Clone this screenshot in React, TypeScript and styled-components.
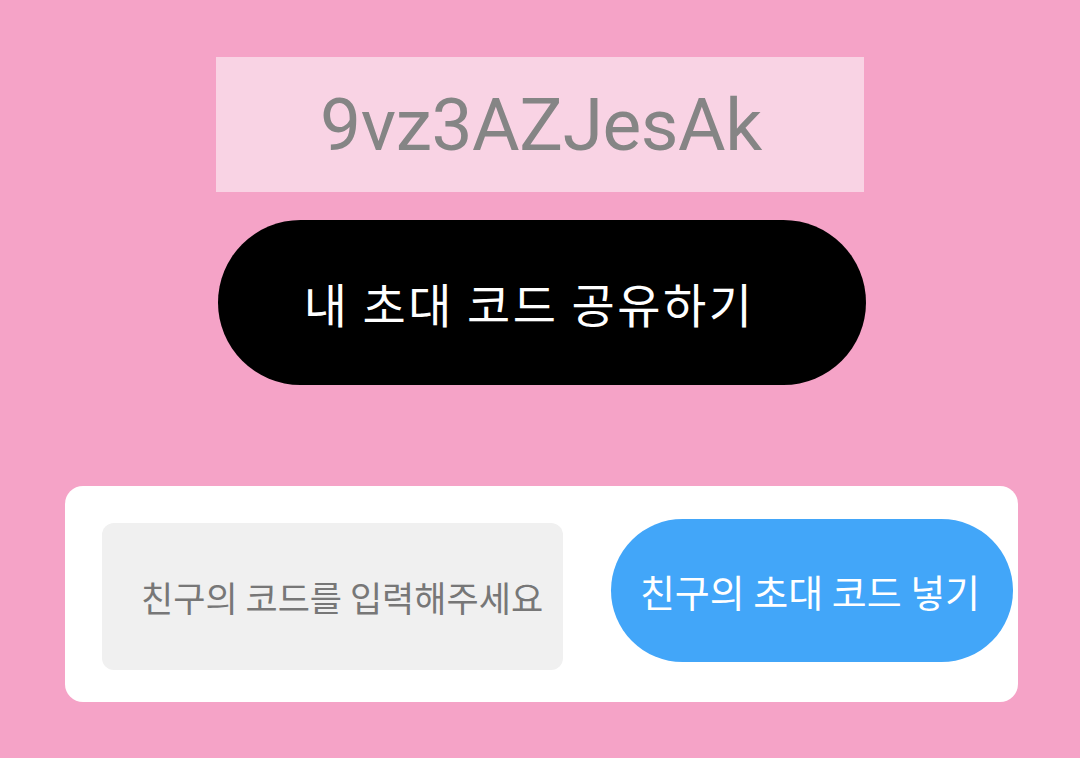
import React from "react";
import styled, { createGlobalStyle } from "styled-components";

const PINK = "#F5A3C7";
const LIGHT_PINK = "#F9D3E4";
const BLUE = "#42A6F9";

const GlobalStyle = createGlobalStyle`
  html, body {
    margin: 0;
    padding: 0;
    background: ${PINK};
  }
  body {
    font-family: "Noto Sans CJK KR", "Noto Sans", sans-serif;
  }
`;

const Page = styled.main`
  width: 1080px;
  height: 758px;
  background: ${PINK};
  display: flex;
  flex-direction: column;
  padding-top: 57px;
  box-sizing: border-box;
`;

const Top = styled.section`
  display: flex;
  flex-direction: column;
  align-items: center;
  gap: 28px;
  padding-left: 4px;
`;

const CodeBox = styled.div`
  width: 648px;
  height: 135px;
  margin-right: 4px;
  background: ${LIGHT_PINK};
  display: flex;
  align-items: center;
  justify-content: center;
  padding-left: 2px;
  box-sizing: border-box;
  font-family: Roboto, "Liberation Sans", sans-serif;
  font-size: 73px;
  color: #858585;
  letter-spacing: -0.4px;
`;

const ShareButton = styled.button`
  width: 648px;
  height: 165px;
  border: none;
  border-radius: 83px;
  background: #000;
  color: #fff;
  font-family: "Noto Sans CJK KR", sans-serif;
  font-size: 47px;
  font-weight: 400;
  letter-spacing: 2.5px;
  padding: 0 26px 0 0;
  cursor: pointer;
`;

const Card = styled.section`
  margin: 101px 62px 0 65px;
  height: 216px;
  box-sizing: border-box;
  background: #fff;
  border-radius: 18px;
  display: flex;
  align-items: flex-start;
  gap: 48px;
  padding: 33px 5px 0 37px;
`;

const CodeInput = styled.input`
  width: 461px;
  height: 147px;
  margin-top: 4px;
  box-sizing: border-box;
  border: none;
  outline: none;
  border-radius: 12px;
  background: #f0f0f0;
  padding: 0 0 0 39px;
  font-family: "Noto Sans CJK KR", sans-serif;
  font-size: 35px;
  color: #555;
  &::placeholder {
    color: #777;
  }
`;

const EnterButton = styled.button`
  width: 402px;
  height: 143px;
  border: none;
  border-radius: 72px;
  background: ${BLUE};
  color: #fff;
  font-family: "Noto Sans CJK KR", sans-serif;
  font-size: 38px;
  font-weight: 400;
  padding: 0 4px 0 0;
  cursor: pointer;
`;

export default function App() {
  return (
    <>
      <GlobalStyle />
      <Page>
        <Top>
          <CodeBox>9vz3AZJesAk</CodeBox>
          <ShareButton>내 초대 코드 공유하기</ShareButton>
        </Top>
        <Card>
          <CodeInput placeholder="친구의 코드를 입력해주세요" />
          <EnterButton>친구의 초대 코드 넣기</EnterButton>
        </Card>
      </Page>
    </>
  );
}
